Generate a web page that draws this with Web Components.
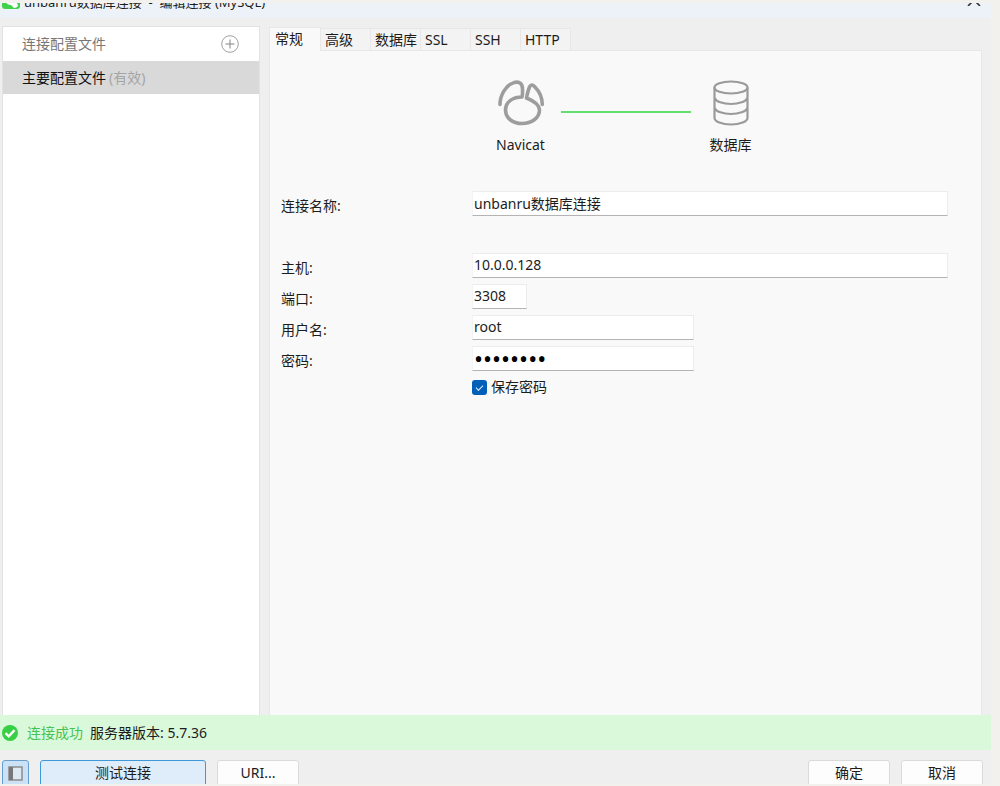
<!DOCTYPE html>
<html lang="zh-CN">
<head>
<meta charset="utf-8">
<title>编辑连接</title>
<style>
  html, body { margin: 0; height: 100%; background: #f2f1ed; }
  body {
    font: 14px/20px "Noto Sans", "Noto Sans CJK SC", sans-serif;
    color: #1c1c1c;
    overflow: hidden;
  }
</style>
</head>
<body>
<connection-window></connection-window>

<script>
const define = (name, html, setup) => {
  const template = document.createElement('template');
  template.innerHTML = html;
  customElements.define(name, class extends HTMLElement {
    constructor() {
      super();
      this.attachShadow({ mode: 'open' }).append(template.content.cloneNode(true));
    }
    connectedCallback() { if (setup) setup(this, this.shadowRoot); }
  });
};

define('title-bar', `
  <style>
    :host { display: flex; align-items: flex-end; height: 15px; padding: 0 10px 0 2px; box-sizing: border-box; background: #edf2f9; overflow: hidden; }
    .logo { flex: none; width: 18px; height: 18px; margin-bottom: 9px; }
    .text { flex: 1; margin: 0 0 6px 4px; white-space: pre; font-size: 13px; line-height: 20px; font-weight: 400; }
    button { border: 0; padding: 0; margin-bottom: 12px; background: none; width: 14px; height: 12px; }
    button svg { display: block; }
  </style>
  <svg class="logo" viewBox="0 0 18 18" aria-hidden="true">
    <rect width="18" height="18" rx="3" fill="#3fd24c"/>
    <path d="M3 9c0 3 3 5 6 5l3 3c2 0 4-1 4-3l-2-3 1-4H4z" fill="#fff"/>
  </svg>
  <h1 class="text"><slot></slot></h1>
  <button type="button" aria-label="关闭">
    <svg width="14" height="12" viewBox="0 0 14 12"><path d="M1 0l12 12M13 0L1 12" stroke="#333" stroke-width="1.6"/></svg>
  </button>
`);

define('profile-list', `
  <style>
    :host { display: block; box-sizing: border-box; background: #fff; border: 1px solid #e2e2e2; border-bottom: 0; }
    header { display: flex; align-items: center; justify-content: space-between; height: 34px; padding: 0 20px 0 19px; color: #777; }
    button { border: 0; padding: 0; background: none; width: 18px; height: 18px; }
    button svg { display: block; }
  </style>
  <header><span>连接配置文件</span>
    <button type="button" aria-label="添加配置文件">
      <svg width="18" height="18" viewBox="0 0 18 18" fill="none" stroke="#a0a0a0"><circle cx="9" cy="9" r="8.3"/><path d="M9 4.5v9M4.5 9h9" stroke="#858585"/></svg>
    </button>
  </header>
  <slot></slot>
`);

define('profile-item', `
  <style>
    :host { display: flex; align-items: center; gap: 3px; height: 33px; padding-left: 19px; background: #d9d9d9; color: #111; }
    ::slotted(small) { font-size: inherit; color: #a5a5a5; }
  </style>
  <slot></slot><slot name="state"></slot>
`);

define('tab-item', `
  <style>
    :host { display: block; flex: none; width: 50px; }
    button { display: block; width: 100%; height: 23px; padding: 0 0 0 4px; box-sizing: border-box; border: 1px solid #e7e7e7; border-width: 1px 1px 1px 0; background: #f3f3f3; font: inherit; color: inherit; text-align: left; white-space: nowrap; }
    :host([selected]) { width: 52px; }
    :host([selected]) button { height: 24px; padding-left: 5px; border-width: 1px 1px 0; padding-bottom: 2px; background: #f9f9f9; }
  </style>
  <button type="button" role="tab"><slot></slot></button>
`);

define('tab-panel', `
  <style>
    :host { display: flex; flex-direction: column; min-width: 0; }
    nav { display: flex; align-items: flex-end; height: 24px; position: relative; z-index: 1; }
    section { flex: 1; margin-top: -1px; border: 1px solid #e7e7e7; border-bottom: 0; background: #f9f9f9; }
  </style>
  <nav role="tablist"><slot name="tab"></slot></nav>
  <section role="tabpanel"><slot></slot></section>
`);

define('link-diagram', `
  <style>
    :host { display: flex; justify-content: center; padding-top: 28px; }
    figure { margin: 0; width: 80px; text-align: center; }
    svg { display: block; margin: 0 auto; }
    figcaption { margin-top: 6px; }
    hr { width: 130px; height: 2px; margin: 32px 0 0; border: 0; background: #64de6c; }
  </style>
  <figure>
    <svg width="50" height="50" viewBox="0 0 50 50" fill="none" stroke="#9d9d9d" stroke-width="3.6" stroke-linecap="round" stroke-linejoin="round">
      <path d="M4 25.500C4 16 10 6 18 3.600C24 2 26.500 5 26.500 10C26.600 13 26.700 15.500 26 18C18 18 9.500 22 9.500 31C9.500 39 16.500 44.500 26 44.500S43.500 39 43.500 31C43.500 26 38 22 30.500 19C31.300 15 32 11.500 33.500 8C34.500 5.500 36.500 5.300 38.500 7.500C43.500 12.500 46.300 18.500 46.300 25.500"/>
    </svg>
    <figcaption>Navicat</figcaption>
  </figure>
  <hr>
  <figure>
    <svg width="50" height="50" viewBox="0 0 50 50" fill="none" stroke="#9a9a9a" stroke-width="2.2">
      <ellipse cx="25" cy="8.500" rx="16.500" ry="6"/>
      <path d="M8.500 8.500V39C8.500 42.500 16 45.500 25 45.500S41.500 42.500 41.500 39V8.500M8.500 19C10 22.500 17 25 25 25S40 22.500 41.500 19M8.500 29C10 32.500 17 35 25 35S40 32.500 41.500 29"/>
    </svg>
    <figcaption>数据库</figcaption>
  </figure>
`);

define('form-field', `
  <style>
    :host { display: grid; grid-template-columns: 191px 1fr; height: 31px; }
    label { padding-top: 5px; }
    input { width: 100%; height: 25px; box-sizing: border-box; padding: 0 1px 2px; border: 1px solid #ececec; border-bottom-color: #b4b4b4; border-left-color: #f4f4f4; outline: 0; background: #fff; font: inherit; color: inherit; }
    :host([size="port"]) input { width: 55px; }
    :host([size="medium"]) input { width: 222px; }
    input[type="password"] { color: #000; font-size: 24px; padding-bottom: 0; }
  </style>
  <label for="control"></label>
  <div><input id="control"></div>
`, (host, root) => {
  root.querySelector('label').textContent = host.getAttribute('label');
  const input = root.querySelector('input');
  input.type = host.getAttribute('type') || 'text';
  input.value = host.getAttribute('value');
});

define('check-field', `
  <style>
    :host { display: flex; padding-left: 191px; }
    label { display: flex; align-items: center; gap: 4px; }
    input { appearance: none; width: 15px; height: 15px; margin: 0; border-radius: 3px; background: #005fb8; display: grid; place-items: center; }
    input::before { content: ""; width: 7px; height: 4px; box-sizing: border-box; border: solid #e4effa; border-width: 0 0 1px 1px; transform: rotate(-45deg); }
  </style>
  <label><input type="checkbox" checked><slot></slot></label>
`);

define('status-bar', `
  <style>
    :host { display: flex; align-items: center; height: 35px; padding-left: 2px; background: #daf9da; }
    strong { font-weight: 400; color: #49c254; margin: 0 7px 0 9px; }
  </style>
  <svg width="16" height="16" viewBox="0 0 16 16" aria-hidden="true"><circle cx="8" cy="8" r="8" fill="#37cf45"/><path d="M3.500 8.200l3.200 3.100L12.500 5.200" fill="none" stroke="#fff" stroke-width="2.4"/></svg>
  <strong><slot name="result"></slot></strong><slot></slot>
`);

define('action-button', `
  <style>
    :host { display: block; width: 82px; }
    button { display: block; width: 100%; height: 28px; box-sizing: border-box; padding: 0 0 2px; border: 1px solid #dadada; border-radius: 3px; background: #fdfdfd; font: inherit; color: inherit; }
    :host([kind="primary"]) { width: 166px; }
    :host([kind="primary"]) button { border-color: #3f98d8; background: #dfecf9; }
    :host([kind="toggle"]) { width: 27px; }
    :host([kind="toggle"]) button { border-color: #669fcd; background: #cbe1f5; display: grid; place-items: center; }
  </style>
  <button type="button"><slot></slot></button>
`, (host, root) => {
  if (host.hasAttribute('label')) root.querySelector('button').setAttribute('aria-label', host.getAttribute('label'));
});

define('connection-window', `
  <style>
    :host { display: flex; flex-direction: column; height: calc(100vh - 5px); margin: 3px 9px 2px 0; background: #efefef; overflow: hidden; }
    main { flex: 1; min-height: 0; display: grid; grid-template-columns: 258px 1fr; gap: 9px; padding: 8px 9px 0 2px; }
    tab-panel { margin-top: 1px; }
    form { padding: 36px 33px 0 11px; }
    .name { margin-bottom: 31px; }
    footer { display: flex; flex: none; height: 24px; padding: 10px 8px 0 2px; gap: 11px; }
    .gap { flex: 1; }
    footer svg { display: block; }
  </style>
  <title-bar>unbanru数据库连接  -  编辑连接 (MySQL)</title-bar>
  <main>
    <profile-list><profile-item>主要配置文件<small slot="state">(有效)</small></profile-item></profile-list>
    <tab-panel>
      <tab-item slot="tab" selected>常规</tab-item>
      <tab-item slot="tab">高级</tab-item>
      <tab-item slot="tab">数据库</tab-item>
      <tab-item slot="tab">SSL</tab-item>
      <tab-item slot="tab">SSH</tab-item>
      <tab-item slot="tab">HTTP</tab-item>
      <link-diagram></link-diagram>
      <form>
        <form-field class="name" label="连接名称:" value="unbanru数据库连接"></form-field>
        <form-field label="主机:" value="10.0.0.128"></form-field>
        <form-field label="端口:" value="3308" size="port"></form-field>
        <form-field label="用户名:" value="root" size="medium"></form-field>
        <form-field label="密码:" value="password" type="password" size="medium"></form-field>
        <check-field>保存密码</check-field>
      </form>
    </tab-panel>
  </main>
  <status-bar><span slot="result">连接成功</span>服务器版本: 5.7.36</status-bar>
  <footer>
    <action-button kind="toggle" label="显示侧边栏"><svg width="15" height="15" viewBox="0 0 15 15"><rect x="1" y="1" width="13" height="13" fill="#dce8f2" stroke="#8c8c8c" stroke-width="1.5"/><path d="M1 1h4v13H1z" fill="#777"/></svg></action-button>
    <action-button kind="primary">测试连接</action-button>
    <action-button>URI...</action-button>
    <span class="gap"></span>
    <action-button>确定</action-button>
    <action-button>取消</action-button>
  </footer>
`);
</script>
</body>
</html>
